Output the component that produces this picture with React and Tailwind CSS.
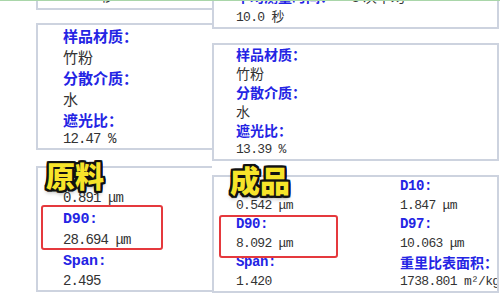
const CJK = "font-['Noto_Sans_CJK_SC',sans-serif]";
const MONO = "font-['Liberation_Mono','Noto_Sans_CJK_SC',monospace]";
const BORDER = "border-[#cdd3df]";
const YEL =
  "absolute font-['Noto_Sans_CJK_SC',sans-serif] font-black leading-none text-[#f7e42a] [text-shadow:2px_0_#111,-2px_0_#111,0_2px_#111,0_-2px_#111,2px_2px_#111,-2px_-2px_#111,2px_-2px_#111,-2px_2px_#111,1px_2px_#111,2px_1px_#111,-1px_2px_#111,-2px_1px_#111,1px_-2px_#111,2px_-1px_#111,-1px_-2px_#111,-2px_-1px_#111,0_3px_4px_rgba(0,0,0,0.45)]";

// Left (larger scale)
function LCn({ children, blue, h = "leading-[21px]" }) {
  return (
    <div
      className={`${CJK} text-[15px] ${h} whitespace-nowrap ${
        blue ? "font-bold text-[#2424e4]" : "text-[#333]"
      }`}
    >
      {children}
    </div>
  );
}
function LNum({ children, h = "leading-[21px]" }) {
  return (
    <div className={`${MONO} text-[14px] ${h} tracking-[-0.9px] text-[#333] whitespace-nowrap`}>
      {children}
    </div>
  );
}
function LKey({ children }) {
  return (
    <div className={`${MONO} font-bold text-[15px] leading-[21px] tracking-[-0.3px] text-[#2424e4] whitespace-nowrap`}>
      {children}
    </div>
  );
}

// Right (slightly smaller scale)
function RCn({ children, blue }) {
  return (
    <div
      className={`${CJK} text-[14px] leading-[19px] whitespace-nowrap ${
        blue ? "font-bold text-[#2424e4]" : "text-[#333]"
      }`}
    >
      {children}
    </div>
  );
}
function RNum({ children }) {
  return (
    <div className={`${MONO} text-[13px] leading-[19px] tracking-[-0.7px] text-[#333] whitespace-nowrap`}>
      {children}
    </div>
  );
}
function RKey({ children }) {
  return (
    <div className={`${MONO} font-bold text-[14px] leading-[19px] tracking-[-0.4px] text-[#2424e4] whitespace-nowrap`}>
      {children}
    </div>
  );
}

export default function App() {
  return (
    <div className="w-[500px] h-[302px] bg-white flex flex-col overflow-hidden">
      <div className="h-px bg-[#a9d6a9] shrink-0" />
      <div className="flex h-[301px] overflow-hidden">
        {/* Left panel */}
        <div className="relative w-[212px] shrink-0 h-full overflow-hidden">
          <div className={`ml-[36px] mt-[-16px] border-l-2 border-b-2 ${BORDER} pl-[25px]`}>
            <LNum>
              10.0 <span className={CJK}>秒</span>
            </LNum>
          </div>
          <div className={`ml-[36px] mt-[13px] border-l-2 border-t-2 border-b-2 ${BORDER} pl-[25px]`}>
            <LCn blue>样品材质：</LCn>
            <LCn>竹粉</LCn>
            <LCn blue>分散介质：</LCn>
            <LCn>水</LCn>
            <LCn blue>遮光比：</LCn>
            <LNum h="leading-[18px]">12.47 %</LNum>
          </div>
          <div className={`ml-[36px] mt-[16px] border-l-2 border-t-2 border-b-2 ${BORDER} pl-[25px]`}>
            <div className="h-[20px]" />
            <LNum>0.891 μm</LNum>
            <LKey>D90:</LKey>
            <LNum>28.694 μm</LNum>
            <LKey>Span:</LKey>
            <LNum h="leading-[18px]">2.495</LNum>
          </div>
          <div className="absolute left-[41px] top-[204px] w-[122px] h-[45px] border-2 border-[#e5393d] rounded-[3px]" />
          <div className={`${YEL} left-[46px] top-[160px] text-[29px]`}>原料</div>
        </div>

        {/* Right panel */}
        <div className="relative flex-1 h-full overflow-hidden">
          <div className={`mt-[-14px] mr-[1px] border-l-2 border-r-2 border-b-2 ${BORDER} pl-[22px]`}>
            <div className="flex">
              <RCn blue>平均测量时间：</RCn>
              <div className="ml-[18px]">
                <RCn>3 次平均</RCn>
              </div>
            </div>
            <RNum>
              10.0 <span className={CJK}>秒</span>
            </RNum>
          </div>
          <div className={`mt-[14px] mr-[1px] border-2 ${BORDER} pl-[22px]`}>
            <RCn blue>样品材质：</RCn>
            <RCn>竹粉</RCn>
            <RCn blue>分散介质：</RCn>
            <RCn>水</RCn>
            <RCn blue>遮光比：</RCn>
            <RNum>13.39 %</RNum>
          </div>
          <div className={`mt-[14px] mr-[1px] border-2 ${BORDER} pl-[22px] flex overflow-hidden`}>
            <div className="w-[164px] shrink-0">
              <div className="h-[19px]" />
              <RNum>0.542 μm</RNum>
              <RKey>D90:</RKey>
              <RNum>8.092 μm</RNum>
              <RKey>Span:</RKey>
              <RNum>1.420</RNum>
            </div>
            <div className="min-w-0 overflow-hidden">
              <RKey>D10:</RKey>
              <RNum>1.847 μm</RNum>
              <RKey>D97:</RKey>
              <RNum>10.063 μm</RNum>
              <RCn blue>重里比表面积：</RCn>
              <RNum>1738.801 m²/kg</RNum>
            </div>
          </div>
          <div className="absolute left-[7px] top-[214px] w-[119px] h-[43px] border-2 border-[#e5393d] rounded-[3px]" />
          <div className={`${YEL} left-[18px] top-[163px] text-[30px]`}>成品</div>
        </div>
      </div>
    </div>
  );
}
